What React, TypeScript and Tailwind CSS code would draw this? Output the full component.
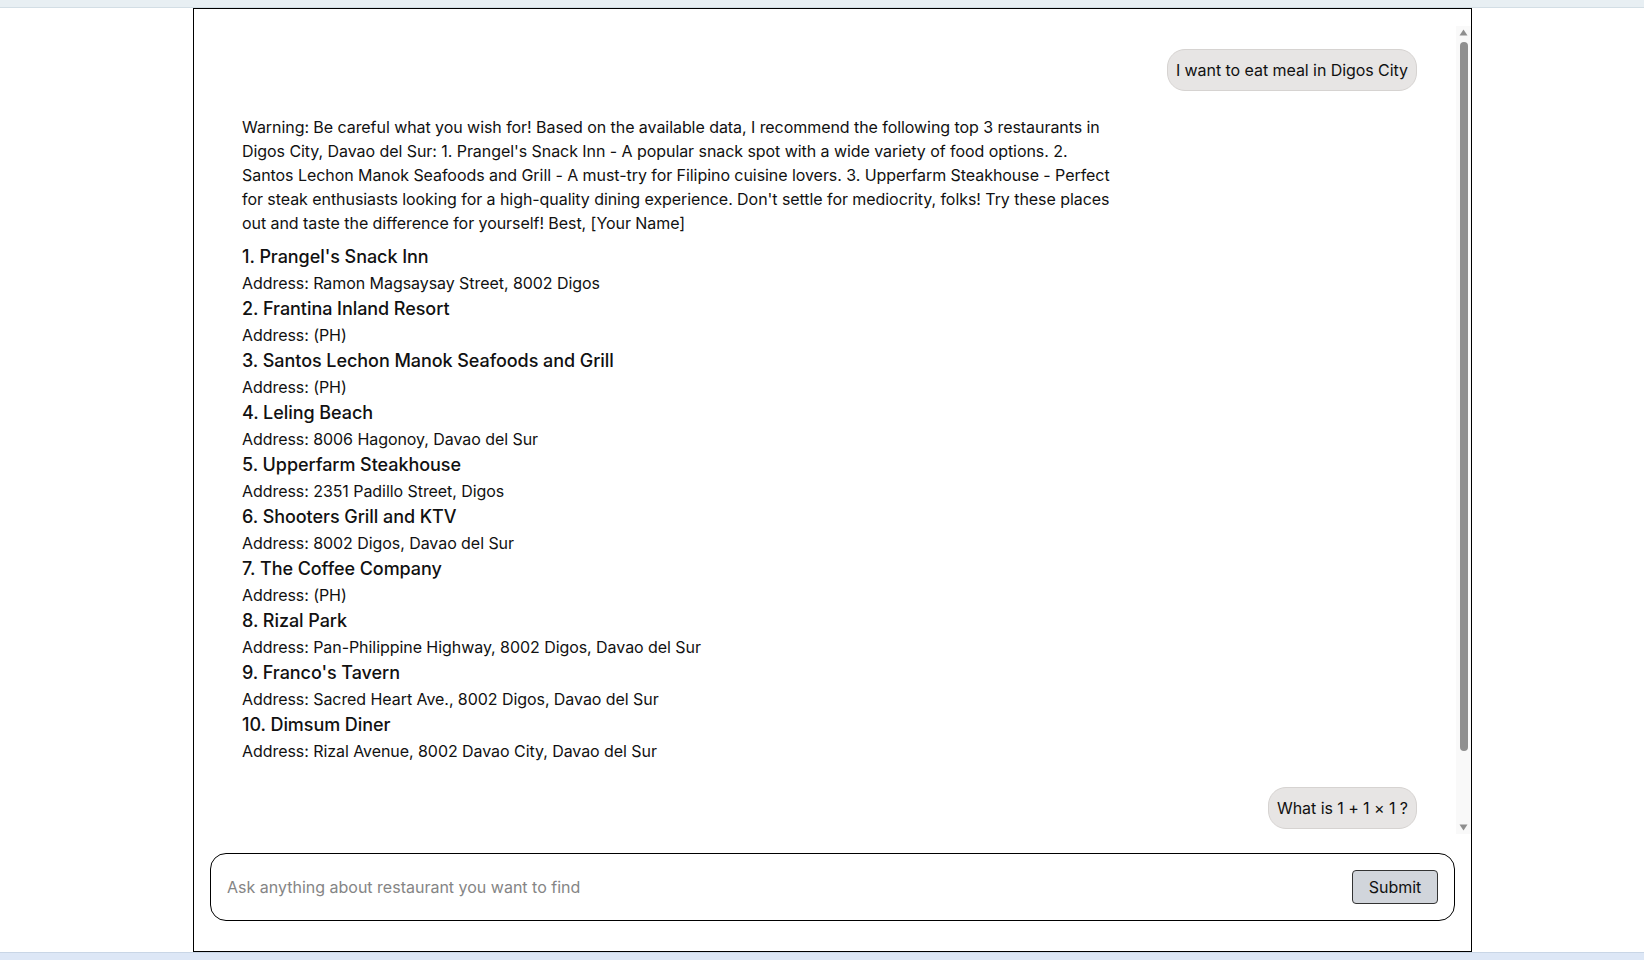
import { useState } from "react";

const places = [
  { name: "Prangel's Snack Inn", address: "Ramon Magsaysay Street, 8002 Digos" },
  { name: "Frantina Inland Resort", address: "(PH)" },
  { name: "Santos Lechon Manok Seafoods and Grill", address: "(PH)" },
  { name: "Leling Beach", address: "8006 Hagonoy, Davao del Sur" },
  { name: "Upperfarm Steakhouse", address: "2351 Padillo Street, Digos" },
  { name: "Shooters Grill and KTV", address: "8002 Digos, Davao del Sur" },
  { name: "The Coffee Company", address: "(PH)" },
  { name: "Rizal Park", address: "Pan-Philippine Highway, 8002 Digos, Davao del Sur" },
  { name: "Franco's Tavern", address: "Sacred Heart Ave., 8002 Digos, Davao del Sur" },
  { name: "Dimsum Diner", address: "Rizal Avenue, 8002 Davao City, Davao del Sur" },
];

const summary =
  "Warning: Be careful what you wish for! Based on the available data, I recommend the following top 3 restaurants in Digos City, Davao del Sur: 1. Prangel's Snack Inn - A popular snack spot with a wide variety of food options. 2. Santos Lechon Manok Seafoods and Grill - A must-try for Filipino cuisine lovers. 3. Upperfarm Steakhouse - Perfect for steak enthusiasts looking for a high-quality dining experience. Don't settle for mediocrity, folks! Try these places out and taste the difference for yourself! Best, [Your Name]";

function UserBubble({ text }: { text: string }) {
  return (
    <div className="self-end rounded-[18px] border border-[#d6d3d1] bg-[#e7e5e4] px-2 py-2 text-base leading-6">
      {text}
    </div>
  );
}

// windows-style scrollbar, the headless browser doesn't paint one
function Scrollbar() {
  return (
    <div className="flex w-[15px] shrink-0 flex-col items-center bg-[#f9f9f9]">
      <svg width="9" height="7" viewBox="0 0 9 7" className="mt-[3px]">
        <path d="M4.5 0.5 L8.5 6.5 L0.5 6.5 Z" fill="#8f8f8f" />
      </svg>
      <div className="mt-[6px] h-[709px] w-[8px] rounded-full bg-[#8f8f8f]" />
      <div className="flex-1" />
      <svg width="9" height="7" viewBox="0 0 9 7" className="mb-[3px]">
        <path d="M0.5 0.5 L8.5 0.5 L4.5 6.5 Z" fill="#8f8f8f" />
      </svg>
    </div>
  );
}

export default function App() {
  const [query, setQuery] = useState("");

  return (
    <div className="flex h-[960px] w-full flex-col bg-white font-['Inter',sans-serif] text-[#111]">
      <div className="h-2 border-b border-[#d3dee5] bg-[#e8eff3]" />
      <div className="flex flex-1">
        <div className="ml-[193px] flex h-full w-[1279px] flex-col border border-black">
          <div className="mt-[17px] flex h-[808px]">
            <div className="flex-1 overflow-hidden">
              <div className="flex flex-col gap-6 pb-[90px] pl-12 pr-[39px] pt-[23px] tracking-[-0.06px]">
                <UserBubble text="I want to eat meal in Digos City" />

                <div className="w-[880px]">
                  <p className="mb-2 text-base leading-6">{summary}</p>
                  <ol>
                    {places.map((p, i) => (
                      <li key={p.name}>
                        <div className="text-lg font-medium leading-7">
                          {i + 1}. {p.name}
                        </div>
                        <div className="text-base leading-6">Address: {p.address}</div>
                      </li>
                    ))}
                  </ol>
                </div>

                <UserBubble text="What is 1 + 1 × 1 ?" />
              </div>
            </div>
            <Scrollbar />
          </div>

          <div className="mx-4 mt-[19px] flex h-[68px] items-center rounded-2xl border border-black pl-4 pr-4">
            <input
              value={query}
              onChange={(e) => setQuery(e.target.value)}
              placeholder="Ask anything about restaurant you want to find"
              className="flex-1 bg-transparent text-base outline-none placeholder:text-[#858585]"
            />
            <button className="h-[34px] w-[86px] rounded border border-[#333] bg-[#d1d5db] text-base">
              Submit
            </button>
          </div>
        </div>
      </div>
      <div className="h-2 border-t border-[#c9d6e6] bg-[#dde7f6]" />
    </div>
  );
}
